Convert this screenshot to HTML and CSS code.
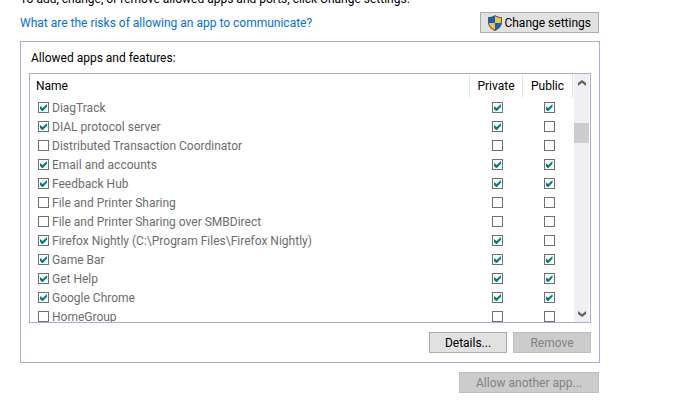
FILE: index.html
```html
<!DOCTYPE html>
<html lang="en">
<head>
    <meta charset="UTF-8">
    <meta name="viewport" content="width=device-width, initial-scale=1.0">
    <title>Allowed apps</title>
    <link rel="stylesheet" href="styles.css">
</head>
<body>

    <main class="page">
        <p class="intro">To add, change, or remove allowed apps and ports, click Change settings.</p>

        <div class="toolbar">
            <a href="#risks">What are the risks of allowing an app to communicate?</a>
            <button class="btn btn-settings" type="button">
                <svg class="shield" viewBox="0 0 14 16" aria-hidden="true">
                    <path fill="#56595c" d="M7 0C5 1.4 2.6 2 0 2v5c0 4 2.6 7 7 9 4.4-2 7-5 7-9V2C11.4 2 9 1.4 7 0z"/>
                    <path fill="#0b63c5" d="M7 1.3V8H1.1L1 2.9C3.4 2.8 5.3 2.3 7 1.3z"/>
                    <path fill="#fdbd3b" d="M7 1.3V8h5.900l.1-5.100C10.600 2.800 8.700 2.300 7 1.300z"/>
                    <path fill="#fdbd3b" d="M1.100 8H7v6.800C3.500 13.200 1.400 11 1.100 8z"/>
                    <path fill="#0b63c5" d="M12.900 8H7v6.800c3.500-1.600 5.600-3.800 5.900-6.800z"/>
                </svg>
                Change settings
            </button>
        </div>

        <section class="panel">
            <h2 id="apps-title">Allowed apps and features:</h2>

            <div class="list">
                <div class="list-view">
                    <table aria-labelledby="apps-title">
                        <thead>
                            <tr>
                                <th class="name">Name</th>
                                <th class="private">Private</th>
                                <th class="public">Public</th>
                            </tr>
                        </thead>
                        <tbody>
                            <tr>
                                <td><label><input type="checkbox" checked disabled>DiagTrack</label></td>
                                <td><input type="checkbox" aria-label="DiagTrack private" checked disabled></td>
                                <td><input type="checkbox" aria-label="DiagTrack public" checked disabled></td>
                            </tr>
                            <tr>
                                <td><label><input type="checkbox" checked disabled>DIAL protocol server</label></td>
                                <td><input type="checkbox" aria-label="DIAL protocol server private" checked disabled></td>
                                <td><input type="checkbox" aria-label="DIAL protocol server public" disabled></td>
                            </tr>
                            <tr>
                                <td><label><input type="checkbox" disabled>Distributed Transaction Coordinator</label></td>
                                <td><input type="checkbox" aria-label="Distributed Transaction Coordinator private" disabled></td>
                                <td><input type="checkbox" aria-label="Distributed Transaction Coordinator public" disabled></td>
                            </tr>
                            <tr>
                                <td><label><input type="checkbox" checked disabled>Email and accounts</label></td>
                                <td><input type="checkbox" aria-label="Email and accounts private" checked disabled></td>
                                <td><input type="checkbox" aria-label="Email and accounts public" checked disabled></td>
                            </tr>
                            <tr>
                                <td><label><input type="checkbox" checked disabled>Feedback Hub</label></td>
                                <td><input type="checkbox" aria-label="Feedback Hub private" checked disabled></td>
                                <td><input type="checkbox" aria-label="Feedback Hub public" checked disabled></td>
                            </tr>
                            <tr>
                                <td><label><input type="checkbox" disabled>File and Printer Sharing</label></td>
                                <td><input type="checkbox" aria-label="File and Printer Sharing private" disabled></td>
                                <td><input type="checkbox" aria-label="File and Printer Sharing public" disabled></td>
                            </tr>
                            <tr>
                                <td><label><input type="checkbox" disabled>File and Printer Sharing over SMBDirect</label></td>
                                <td><input type="checkbox" aria-label="File and Printer Sharing over SMBDirect private" disabled></td>
                                <td><input type="checkbox" aria-label="File and Printer Sharing over SMBDirect public" disabled></td>
                            </tr>
                            <tr>
                                <td><label><input type="checkbox" checked disabled>Firefox Nightly (C:\Program Files\Firefox Nightly)</label></td>
                                <td><input type="checkbox" aria-label="Firefox Nightly private" checked disabled></td>
                                <td><input type="checkbox" aria-label="Firefox Nightly public" disabled></td>
                            </tr>
                            <tr>
                                <td><label><input type="checkbox" checked disabled>Game Bar</label></td>
                                <td><input type="checkbox" aria-label="Game Bar private" checked disabled></td>
                                <td><input type="checkbox" aria-label="Game Bar public" checked disabled></td>
                            </tr>
                            <tr>
                                <td><label><input type="checkbox" checked disabled>Get Help</label></td>
                                <td><input type="checkbox" aria-label="Get Help private" checked disabled></td>
                                <td><input type="checkbox" aria-label="Get Help public" checked disabled></td>
                            </tr>
                            <tr>
                                <td><label><input type="checkbox" checked disabled>Google Chrome</label></td>
                                <td><input type="checkbox" aria-label="Google Chrome private" checked disabled></td>
                                <td><input type="checkbox" aria-label="Google Chrome public" checked disabled></td>
                            </tr>
                            <tr>
                                <td><label><input type="checkbox" disabled>HomeGroup</label></td>
                                <td><input type="checkbox" aria-label="HomeGroup private" disabled></td>
                                <td><input type="checkbox" aria-label="HomeGroup public" disabled></td>
                            </tr>
                        </tbody>
                    </table>
                </div>
                <div class="scrollbar">
                    <button type="button" aria-label="Scroll up">
                        <svg viewBox="0 0 8 6" aria-hidden="true"><path d="M0 3l4-3 4 3v3L4 2.8 0 6z"/></svg>
                    </button>
                    <div class="track"><div class="thumb"></div></div>
                    <button type="button" aria-label="Scroll down">
                        <svg viewBox="0 0 8 6" aria-hidden="true"><path d="M0 0l4 3.2L8 0v3L4 6 0 3z"/></svg>
                    </button>
                </div>
            </div>

            <div class="actions">
                <button class="btn" type="button">Details...</button>
                <button class="btn" type="button" disabled>Remove</button>
            </div>
        </section>

        <div class="footer">
            <button class="btn btn-allow" type="button" disabled>Allow another app...</button>
        </div>
    </main>

</body>
</html>
```
FILE: styles.css
```css
* {
    box-sizing: border-box;
}

body {
    margin: 0;
    background-color: #fff;
    color: #000;
    font-family: Roboto, "Open Sans", sans-serif;
    font-size: 12px;
    line-height: 16px;
    overflow: hidden;
}

button {
    font: inherit;
    color: inherit;
}

.page {
    margin: -9px 81px 0 20px;
}

.intro {
    margin: 0 0 5px;
}

.toolbar {
    display: flex;
    justify-content: space-between;
    align-items: center;
    margin-bottom: 8px;
}

.toolbar a {
    color: #066fd8;
    text-decoration: none;
}

.btn {
    display: flex;
    justify-content: center;
    align-items: center;
    min-width: 78px;
    height: 21px;
    padding: 0 7px;
    background-color: #e1e1e1;
    border: 1px solid #adadad;
    white-space: nowrap;
}

.btn:disabled {
    background-color: #ccc;
    border-color: #bfbfbf;
    color: #838383;
}

.btn-settings {
    gap: 2px;
    margin-right: 1px;
}

.btn-allow {
    min-width: 140px;
}

.shield {
    width: 14px;
    height: 16px;
}

.panel {
    padding: 8px 8px 9px;
    border: 1px solid #acacdc;
}

.panel h2 {
    margin: 0 0 7px 2px;
    font-size: 12px;
    font-weight: normal;
}

.list {
    display: flex;
    height: 250px;
    border: 1px solid #acacdc;
}

.list-view {
    flex: 1;
    overflow: hidden;
}

table {
    width: 100%;
    border-collapse: separate;
    border-spacing: 0;
    table-layout: fixed;
}

th {
    height: 24px;
    padding: 0;
    border-right: 1px solid #e5e5e5;
    font-weight: normal;
}

th.name {
    padding-left: 6px;
    text-align: left;
}

th.private {
    width: 53px;
}

th.public {
    width: 50px;
}

td {
    height: 19px;
    padding: 0 0 0 2px;
    color: #6d6d6d;
    text-align: center;
}

td:first-child {
    padding-left: 8px;
    text-align: left;
}

td label {
    display: flex;
    align-items: center;
    gap: 3px;
}

input[type="checkbox"] {
    appearance: none;
    display: block;
    width: 11px;
    height: 11px;
    margin: 0 auto;
    padding: 1px;
    background-color: #fff;
    border: 1px solid #707070;
}

td label input[type="checkbox"] {
    margin: 0;
}

input[type="checkbox"]:checked::before {
    content: "";
    display: block;
    width: 7px;
    height: 7px;
    background-color: #008080;
    clip-path: polygon(0 30%, 38% 58%, 100% 0, 100% 40%, 42% 100%, 28% 100%, 0 70%);
}

.scrollbar {
    display: flex;
    flex-direction: column;
    width: 15px;
    margin: 0 1px;
    background-color: #f0f0f0;
}

.scrollbar button {
    display: flex;
    justify-content: center;
    align-items: center;
    height: 17px;
    padding: 0;
    background: none;
    border: none;
}

.scrollbar svg {
    width: 8px;
    height: 6px;
    fill: #606060;
}

.track {
    flex: 1;
    padding-top: 32px;
}

.thumb {
    height: 20px;
    background-color: #cdcdcd;
}

.actions {
    display: flex;
    justify-content: flex-end;
    gap: 6px;
    margin-top: 9px;
}

.footer {
    display: flex;
    justify-content: flex-end;
    margin: 9px 1px 0 0;
}
```
